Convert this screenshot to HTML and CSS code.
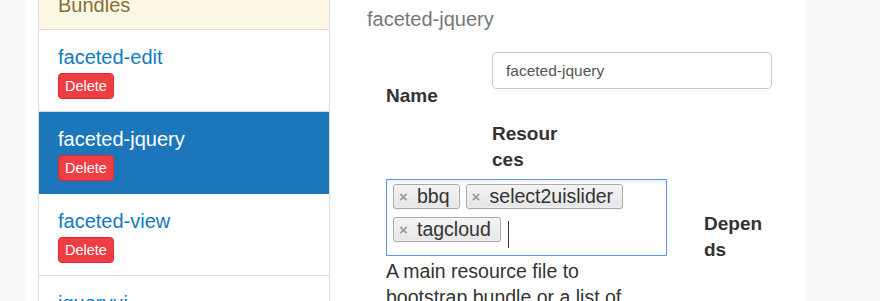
FILE: index.html
```html
<!DOCTYPE html>
<html lang="en">
<head>
  <meta charset="UTF-8" />
  <title>Bundles</title>
  <link rel="stylesheet" href="styles.css">
</head>
<body>
  <div class="layout">
    <div class="gutter"></div>
    <div class="page">
      <div class="sidebar">
        <div class="panel-heading">Bundles</div>
        <ul class="bundle-list">
          <li class="bundle-item">
            <a href="#" class="bundle-name">faceted-edit</a>
            <button class="btn-delete">Delete</button>
          </li>
          <li class="bundle-item active">
            <a href="#" class="bundle-name">faceted-jquery</a>
            <button class="btn-delete">Delete</button>
          </li>
          <li class="bundle-item">
            <a href="#" class="bundle-name">faceted-view</a>
            <button class="btn-delete">Delete</button>
          </li>
          <li class="bundle-item">
            <a href="#" class="bundle-name">jqueryui</a>
            <button class="btn-delete">Delete</button>
          </li>
        </ul>
      </div>

      <div class="main">
        <h3 class="bundle-title">faceted-jquery</h3>

        <div class="field-name">
          <label class="field-label name-label">Name</label>
          <input class="field-input" value="faceted-jquery">
        </div>

        <div class="field-label resources-label">Resources</div>

        <div class="field-row">
          <div class="tag-box">
            <ul class="tag-list">
              <li class="tag"><span class="tag-remove">&times;</span>bbq</li>
              <li class="tag"><span class="tag-remove">&times;</span>select2uislider</li>
              <li class="tag"><span class="tag-remove">&times;</span>tagcloud</li>
              <li class="tag-search"><span class="text-cursor"></span></li>
            </ul>
          </div>
          <div class="field-label depends-label">Depends</div>
        </div>

        <p class="help-text">A main resource file to bootstrap bundle or a list of resources</p>
      </div>
    </div>
    <div class="gutter gutter-right"></div>
  </div>
</body>
</html>
```

FILE: styles.css
```css
body {
  margin: 0;
  height: 301px;
  overflow: hidden;
  font-family: "Liberation Sans", Arial, sans-serif;
  color: #333;
  background: #fff;
}

.layout {
  display: flex;
  height: 301px;
}

.gutter {
  width: 25px;
  background: #f9f9f9;
}

.gutter-right {
  width: 75px;
}

.page {
  flex: 1;
  display: flex;
  background: #fff;
}

/* sidebar */

.sidebar {
  width: 292px;
  margin-left: 13px;
  margin-top: -22px;
  border-left: 1px solid #ddd;
  border-right: 1px solid #ddd;
  box-sizing: border-box;
  align-self: flex-start;
}

.panel-heading {
  padding: 15px 20px 12px 19px;
  font-size: 20px;
  line-height: 24px;
  color: #8a6d3b;
  background: #fcf8e3;
  border-bottom: 1px solid #ddd;
}

.bundle-list {
  list-style: none;
  margin: 0;
  padding: 0;
}

.bundle-item {
  padding: 15px 20px 12px 19px;
  border-bottom: 1px solid #ddd;
}

.bundle-item.active {
  background: #1c76bc;
  border-bottom-color: #1c76bc;
}

.bundle-name {
  display: block;
  font-size: 20px;
  line-height: 24px;
  color: #107bbf;
  text-decoration: none;
}

.bundle-item.active .bundle-name {
  color: #fff;
}

.btn-delete {
  display: block;
  margin-top: 4px;
  height: 26px;
  padding: 0 6px;
  font-family: "Liberation Sans", Arial, sans-serif;
  font-size: 14.5px;
  line-height: 24px;
  color: #fff;
  background: #ee3d43;
  border: 1px solid #dd2a30;
  border-radius: 4px;
}

/* main form */

.main {
  flex: 1;
  padding: 7px 0 0 37px;
}

.bundle-title {
  margin: 0;
  font-size: 20px;
  font-weight: normal;
  line-height: 24px;
  color: #777;
}

.field-label {
  font-size: 19px;
  font-weight: bold;
  line-height: 26px;
  color: #333;
}

.field-name {
  display: flex;
  align-items: flex-start;
  margin: 21px 0 0 19px;
}

.name-label {
  width: 106px;
  padding-top: 31px;
}

.field-input {
  width: 280px;
  height: 37px;
  box-sizing: border-box;
  padding: 0 13px;
  font-family: "Liberation Sans", Arial, sans-serif;
  font-size: 15.5px;
  color: #555;
  border: 1px solid #ccc;
  border-radius: 4px;
}

.resources-label {
  width: 70px;
  margin: 12px 0 0 125px;
  word-break: break-all;
}

.field-row {
  display: flex;
  align-items: flex-start;
  margin: 6px 0 0 19px;
}

.tag-box {
  width: 281px;
  height: 77px;
  box-sizing: border-box;
  border: 1px solid #5897fb;
  background: #fff;
  box-shadow: inset 0 4px 6px -4px rgba(0,0,0,0.12);
}

.tag-list {
  list-style: none;
  margin: 0;
  padding: 4px 0 0 6px;
  display: flex;
  flex-wrap: wrap;
  align-items: flex-start;
  gap: 8px 6px;
}

.tag {
  position: relative;
  height: 25px;
  box-sizing: border-box;
  padding: 0 9px 0 23px;
  font-size: 19.5px;
  line-height: 23px;
  color: #333;
  background: linear-gradient(#f4f4f4, #e6e6e6);
  border: 1px solid #aaa;
  border-radius: 3px;
  box-shadow: 0 0 2px #fff inset, 0 1px 0 rgba(0,0,0,0.05);
}

.tag-remove {
  position: absolute;
  left: 5px;
  top: 0;
  font-size: 15px;
  font-weight: bold;
  color: #999;
}

.tag-search {
  padding: 4px 0 0 1px;
}

.text-cursor {
  display: block;
  width: 1px;
  height: 27px;
  background: #333;
}

.depends-label {
  width: 64px;
  margin: 32px 0 0 37px;
  word-break: break-all;
}

.help-text {
  width: 260px;
  margin: -5px 0 0 19px;
  font-size: 19.5px;
  line-height: 26px;
  color: #333;
}
```
